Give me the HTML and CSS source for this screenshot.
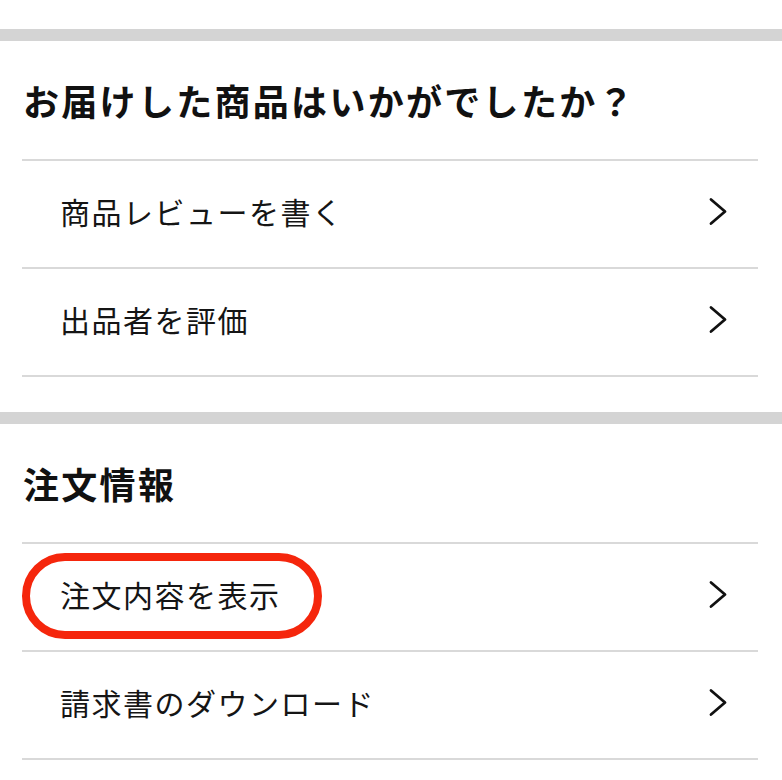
FILE: index.html
```html
<!DOCTYPE html>
<html lang="ja">
<head>
    <meta charset="UTF-8">
    <meta name="viewport" content="width=device-width, initial-scale=1.0">
    <title>注文の詳細</title>
    <link rel="stylesheet" href="styles.css">
</head>
<body>

<!-- Feedback section -->
<div class="section">
    <h2 class="section-title">お届けした商品はいかがでしたか？</h2>
    <ul class="menu">
        <li class="menu-item">
            <span class="label">商品レビューを書く</span>
            <svg class="chevron" viewBox="0 0 18 28"><polyline points="2,2 16,14 2,26"/></svg>
        </li>
        <li class="menu-item">
            <span class="label">出品者を評価</span>
            <svg class="chevron" viewBox="0 0 18 28"><polyline points="2,2 16,14 2,26"/></svg>
        </li>
    </ul>
</div>

<!-- Order info section -->
<div class="section">
    <h2 class="section-title">注文情報</h2>
    <ul class="menu">
        <li class="menu-item">
            <span class="label">注文内容を表示</span>
            <span class="highlight"></span>
            <svg class="chevron" viewBox="0 0 18 28"><polyline points="2,2 16,14 2,26"/></svg>
        </li>
        <li class="menu-item">
            <span class="label">請求書のダウンロード</span>
            <svg class="chevron" viewBox="0 0 18 28"><polyline points="2,2 16,14 2,26"/></svg>
        </li>
    </ul>
</div>

</body>
</html>
```

FILE: styles.css
```css
body {
    margin: 0;
    padding-top: 29px;
    background: #ffffff;
    color: #151515;
    font-family: "Noto Sans CJK JP", "Noto Sans", sans-serif;
}
.section {
    border-top: 12px solid #d4d4d4;
    padding-bottom: 35px;
}
.section-title {
    margin: 0;
    height: 118px;
    display: flex;
    align-items: center;
    padding-left: 23px;
    font-size: 36px;
    font-weight: bold;
    letter-spacing: 2.3px;
    color: #111;
}
.menu {
    list-style: none;
    margin: 0 24px 0 22px;
    padding: 0;
    border-bottom: 2px solid #d9d9d9;
}
.menu-item {
    position: relative;
    box-sizing: border-box;
    height: 108px;
    border-top: 2px solid #d9d9d9;
    display: flex;
    align-items: center;
    justify-content: space-between;
    padding: 0 31px 6px 38px;
}
.label {
    font-size: 30px;
    letter-spacing: 1.5px;
}
.chevron {
    width: 18px;
    height: 29px;
    fill: none;
    stroke: #111;
    stroke-width: 2.8;
    stroke-linecap: round;
    stroke-linejoin: round;
}
.highlight {
    position: absolute;
    left: 0;
    top: 9px;
    width: 300px;
    height: 86px;
    box-sizing: border-box;
    border: 8px solid #f5260c;
    border-radius: 43px;
}
```
